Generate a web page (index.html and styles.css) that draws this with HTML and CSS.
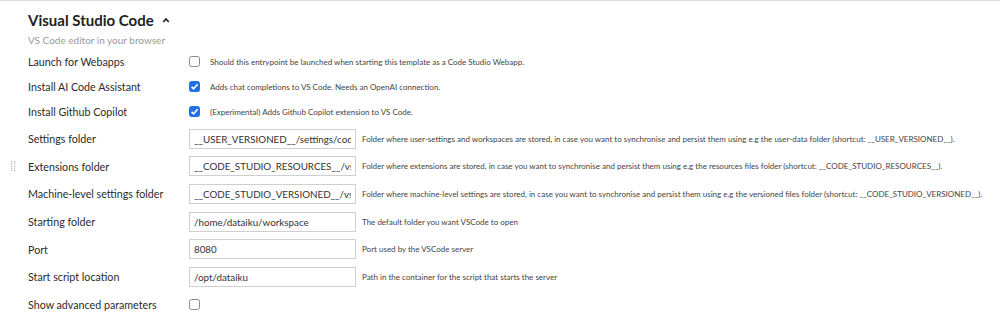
FILE: index.html
```html
<!DOCTYPE html>
<html>
<head>
<meta charset="utf-8">
<link rel="stylesheet" href="styles.css">
</head>
<body>
<div class="panel">
  <div class="section">
    <div class="header">
      <h2 class="title">Visual Studio Code
        <svg class="chevron" width="8" height="6" viewBox="0 0 8 6"><path d="M1.2 5 L4 2 L6.8 5" fill="none" stroke="#222" stroke-width="1.7"/></svg>
      </h2>
      <div class="subtitle">VS Code editor in your browser</div>
    </div>
    <div class="form">
      <div class="row check-row">
        <div class="label">Launch for Webapps</div>
        <span class="cb"></span>
        <span class="help help-cb">Should this entrypoint be launched when starting this template as a Code Studio Webapp.</span>
      </div>
      <div class="row check-row">
        <div class="label">Install AI Code Assistant</div>
        <span class="cb checked"><svg width="11" height="11" viewBox="0 0 11 11"><path d="M2.6 5.8 L4.6 7.8 L8.6 3.2" fill="none" stroke="#fff" stroke-width="1.7"/></svg></span>
        <span class="help help-cb">Adds chat completions to VS Code. Needs an OpenAI connection.</span>
      </div>
      <div class="row check-row">
        <div class="label">Install Github Copilot</div>
        <span class="cb checked"><svg width="11" height="11" viewBox="0 0 11 11"><path d="M2.6 5.8 L4.6 7.8 L8.6 3.2" fill="none" stroke="#fff" stroke-width="1.7"/></svg></span>
        <span class="help help-cb">(Experimental) Adds Github Copilot extension to VS Code.</span>
      </div>
      <div class="inputs">
        <div class="row input-row">
          <div class="label">Settings folder</div>
          <input class="field" type="text" value="__USER_VERSIONED__/settings/code-server" readonly>
          <span class="help">Folder where user-settings and workspaces are stored, in case you want to synchronise and persist them using e.g the user-data folder (shortcut: __USER_VERSIONED__).</span>
        </div>
        <div class="row input-row">
          <span class="grip"><svg width="5" height="12" viewBox="0 0 5 12"><g fill="#b5b5b5"><rect x="0" y="0" width="1.2" height="1.2"/><rect x="3" y="0" width="1.2" height="1.2"/><rect x="0" y="2.2" width="1.2" height="1.2"/><rect x="3" y="2.2" width="1.2" height="1.2"/><rect x="0" y="4.4" width="1.2" height="1.2"/><rect x="3" y="4.4" width="1.2" height="1.2"/><rect x="0" y="6.6" width="1.2" height="1.2"/><rect x="3" y="6.6" width="1.2" height="1.2"/><rect x="0" y="8.8" width="1.2" height="1.2"/><rect x="3" y="8.8" width="1.2" height="1.2"/></g></svg></span>
          <div class="label">Extensions folder</div>
          <input class="field" type="text" value="__CODE_STUDIO_RESOURCES__/vscode-extensions" readonly>
          <span class="help">Folder where extensions are stored, in case you want to synchronise and persist them using e.g the resources files folder (shortcut: __CODE_STUDIO_RESOURCES__).</span>
        </div>
        <div class="row input-row">
          <div class="label">Machine-level settings folder</div>
          <input class="field" type="text" value="__CODE_STUDIO_VERSIONED__/vscode-settings" readonly>
          <span class="help">Folder where machine-level settings are stored, in case you want to synchronise and persist them using e.g the versioned files folder (shortcut: __CODE_STUDIO_VERSIONED__).</span>
        </div>
        <div class="row input-row">
          <div class="label">Starting folder</div>
          <input class="field" type="text" value="/home/dataiku/workspace" readonly>
          <span class="help">The default folder you want VSCode to open</span>
        </div>
        <div class="row input-row">
          <div class="label">Port</div>
          <input class="field" type="text" value="8080" readonly>
          <span class="help">Port used by the VSCode server</span>
        </div>
        <div class="row input-row">
          <div class="label">Start script location</div>
          <input class="field" type="text" value="/opt/dataiku" readonly>
          <span class="help">Path in the container for the script that starts the server</span>
        </div>
      </div>
      <div class="row last-row">
        <div class="label">Show advanced parameters</div>
        <span class="cb"></span>
      </div>
    </div>
  </div>
</div>
</body>
</html>
```
FILE: styles.css
```css
html, body {
  margin: 0;
  padding: 0;
  background: #fff;
}
body {
  font-family: Lato, "Liberation Sans", sans-serif;
  color: #333;
  width: 1000px;
  height: 327px;
  overflow: hidden;
}
.panel {
  border-top: 1px solid #dcdcdc;
}
.section {
  padding-left: 28px;
}
.header {
  padding-top: 9px;
}
.title {
  margin: 0;
  font-size: 15px;
  font-weight: 700;
  line-height: 20px;
  color: #222;
  display: flex;
  align-items: center;
}
.chevron {
  margin-left: 8px;
  margin-top: -1px;
}
.subtitle {
  margin-top: 1.5px;
  font-size: 10px;
  line-height: 16px;
  color: #999;
}
.form {
  display: flex;
  flex-direction: column;
  margin-top: 1.5px;
}
.row {
  position: relative;
  display: flex;
  align-items: center;
  white-space: nowrap;
}
.check-row {
  height: 25px;
}
.inputs {
  margin-top: 1px;
}
.input-row {
  height: 27.6px;
}
.last-row {
  height: 27px;
}
.label {
  width: 161px;
  flex: none;
  font-size: 10.7px;
  color: #2b2b2b;
}
.cb {
  flex: none;
  width: 11px;
  height: 11px;
  box-sizing: border-box;
  border: 1px solid #8a8a8a;
  border-radius: 2.5px;
  background: #fff;
  display: flex;
}
.cb.checked {
  background: #1f6fe5;
  border-color: #1f6fe5;
}
.cb.checked svg {
  margin: -1px;
}
.help {
  font-size: 8px;
  color: #444;
}
.help-cb {
  margin-left: 10px;
}
.field {
  flex: none;
  width: 167px;
  height: 20px;
  box-sizing: border-box;
  margin: 0;
  border: 1px solid #cfcfcf;
  border-radius: 0;
  padding: 0 4px;
  font-family: Lato, "Liberation Sans", sans-serif;
  font-size: 9.8px;
  color: #333;
  background: #fff;
  outline: none;
}
.input-row .help {
  margin-left: 6px;
}
.grip {
  position: absolute;
  left: -17px;
  top: 8px;
  display: flex;
}
```
